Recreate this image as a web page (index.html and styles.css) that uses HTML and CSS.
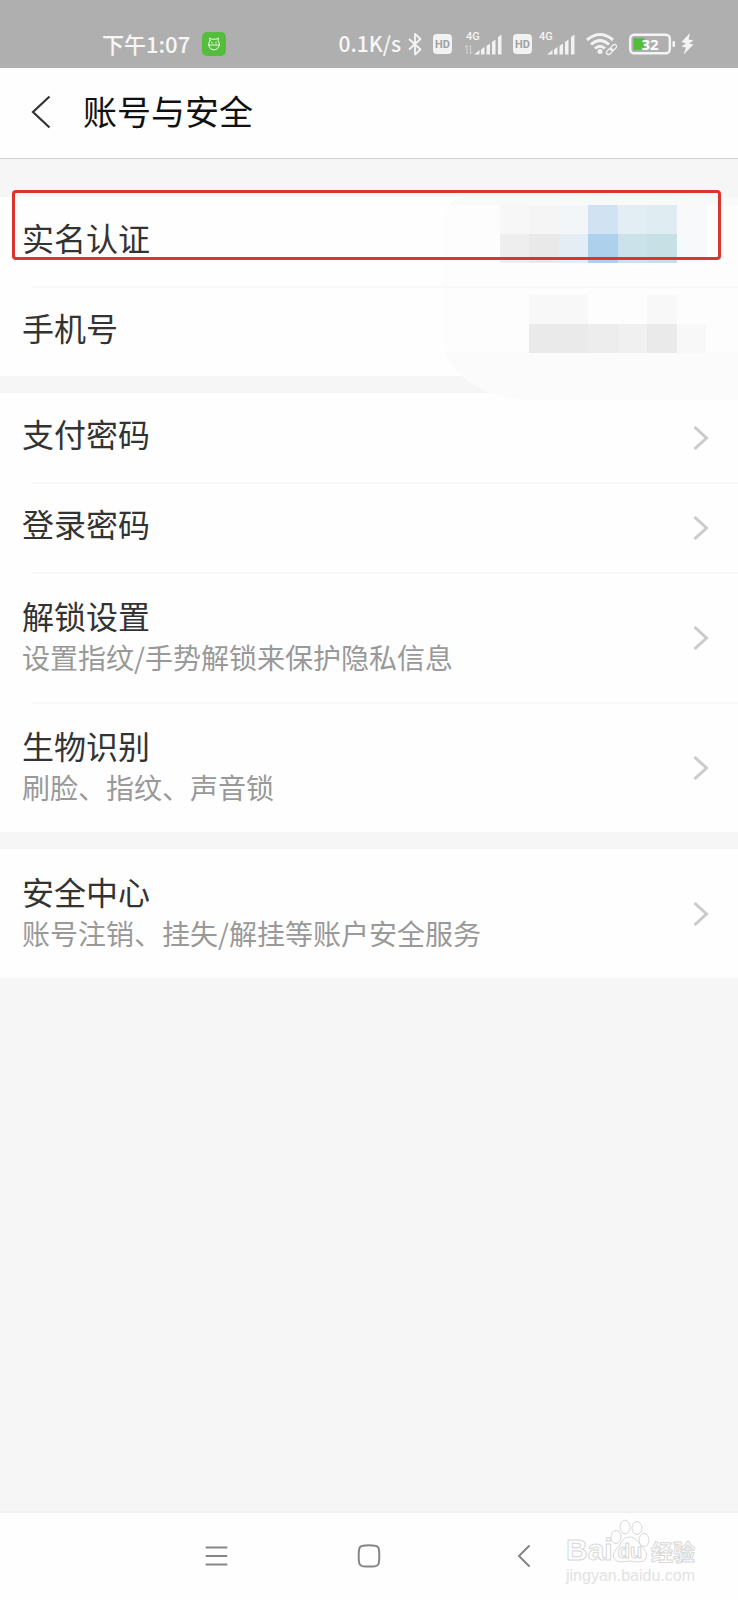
FILE: index.html
```
<!DOCTYPE html>
<html lang="zh-CN">
<head>
    <meta charset="UTF-8">
    <meta name="viewport" content="width=device-width, initial-scale=1.0">
    <title>账号与安全</title>
    <link rel="stylesheet" href="styles.css">
</head>
<body>
    <!-- Status bar -->
    <div class="status-bar">
        <div class="status-left">
            <span class="time">下午1:07</span>
            <svg width="24" height="24" viewBox="0 0 24 24">
                <rect width="24" height="24" rx="5" fill="#55bd3c"/>
                <g fill="none" stroke="#e9fae4" stroke-width="1" stroke-linecap="round" stroke-linejoin="round">
                    <path d="M8 8.500 7.500 6 10 7.300Q12 6.800 14 7.300L16.500 6 16 8.500Q18 11 17.200 14 15.500 18 12 18 8.500 18 6.800 14 6 11 8 8.500Z"/>
                    <path d="M6.500 13H17.500M10 10.200V11M14 10.200V11"/>
                </g>
            </svg>
        </div>
        <div class="status-right">
            <span class="speed">0.1K/s</span>
            <svg width="20" height="24" viewBox="0 0 20 24">
                <path d="M2 7 13.500 17.500 8 22.500V2L13.500 7 2 17.500" fill="none" stroke="#f5f5f5" stroke-width="1.800" stroke-linejoin="round"/>
            </svg>
            <svg width="25" height="24" viewBox="0 0 25 24">
                <rect y="2" width="19" height="20" rx="4" fill="#f2f2f2"/>
                <text class="hd" x="9.500" y="16" text-anchor="middle">HD</text>
            </svg>
            <svg width="43" height="28" viewBox="0 0 43 28">
                <text class="net" x="2" y="10">4G</text>
                <path d="M3 24V15L1 17M6.500 15V24L8.500 22" fill="none" stroke="#d5d5d5" stroke-width="1"/>
                <path d="M10 24.500 15.500 20V24.500ZM17 19.500 20.500 17V24.500H17ZM22.500 16 26 13.500V24.500H22.500ZM28 12 31.500 9.500V24.500H28ZM34 7 37.500 4.500V24.500H34Z" fill="#f2f2f2"/>
            </svg>
            <svg width="20" height="24" viewBox="0 0 20 24">
                <rect y="2" width="19" height="20" rx="4" fill="#f2f2f2"/>
                <text class="hd" x="9.500" y="16" text-anchor="middle">HD</text>
            </svg>
            <svg width="40" height="28" viewBox="0 0 40 28">
                <text class="net" x="0" y="10">4G</text>
                <path d="M8 24.500 13.500 20V24.500ZM15 19.500 18.500 17V24.500H15ZM20.500 16 24 13.500V24.500H20.500ZM26 12 29.500 9.500V24.500H26ZM32 7 35.500 4.500V24.500H32Z" fill="#f2f2f2"/>
            </svg>
            <svg width="38" height="24" viewBox="0 0 38 24">
                <g fill="none" stroke="#f2f2f2" stroke-width="3">
                    <path d="M2 8Q15 -3 28 8"/>
                    <path d="M6 12.500Q15 4.500 24 12.500"/>
                    <path d="M10 16.500Q15 12 20 16.500"/>
                </g>
                <circle cx="15" cy="19.500" r="2.500" fill="#f2f2f2"/>
                <g fill="none" stroke="#f2f2f2" stroke-width="1.300">
                    <rect x="21" y="17.500" width="7" height="4" rx="2" transform="rotate(-45 24.500 19.500)"/>
                    <rect x="25" y="13.500" width="7" height="4" rx="2" transform="rotate(-45 28.500 15.500)"/>
                </g>
            </svg>
            <svg width="46" height="24" viewBox="0 0 46 24">
                <rect x="1.200" y="2.700" width="39.600" height="18.600" rx="4" fill="none" stroke="#f5f5f5" stroke-width="2.400"/>
                <rect x="4.500" y="6" width="11" height="12" fill="#55bd3c"/>
                <rect x="43.500" y="9" width="2.500" height="6" rx="1" fill="#f5f5f5"/>
                <text class="battery" x="21" y="17.500" text-anchor="middle">32</text>
            </svg>
            <svg width="13" height="24" viewBox="0 0 13 24">
                <path d="M9 1 0.500 10 5 11.500 0.500 14.500 5 15.500 2.500 22.500 12.500 12.500 8 11.500 12.500 8.500 7.500 7.500Z" fill="#f5f5f5"/>
            </svg>
        </div>
    </div>

    <!-- Title bar -->
    <header class="header">
        <button class="back-button" type="button" aria-label="返回">
            <svg width="20" height="34" viewBox="0 0 20 34">
                <path d="M18.500 1.500 2 17 18.500 32.500" fill="none" stroke="#333" stroke-width="2.200"/>
            </svg>
        </button>
        <h1>账号与安全</h1>
    </header>

    <main class="content">
        <div class="group group-private">
            <div class="smudge"></div>
            <a class="row" href="#">
                <span class="row-text"><span class="label">实名认证</span></span>
                <span class="mosaic">
                    <i class="t1"></i><i class="t2"></i><i class="t3"></i><i class="t4"></i><i class="t5"></i><i class="t6"></i><i class="t7"></i>
                    <i class="t8"></i><i class="t9"></i><i class="t10"></i><i class="t11"></i><i class="t12"></i><i class="t13"></i><i class="t7"></i>
                </span>
            </a>
            <a class="row" href="#">
                <span class="row-text"><span class="label">手机号</span></span>
                <span class="mosaic">
                    <i></i><i class="g1"></i><i class="g1"></i><i></i><i></i><i class="g1"></i><i></i>
                    <i></i><i class="g4"></i><i class="g4"></i><i class="g3"></i><i class="g2"></i><i class="g4"></i><i class="g1"></i>
                </span>
            </a>
            <div class="highlight"></div>
        </div>

        <div class="group">
            <a class="row" href="#">
                <span class="row-text"><span class="label">支付密码</span></span>
                <svg class="chevron" viewBox="0 0 16 24"><path d="M1.500 1 13.500 12 1.500 23"/></svg>
            </a>
            <a class="row" href="#">
                <span class="row-text"><span class="label">登录密码</span></span>
                <svg class="chevron" viewBox="0 0 16 24"><path d="M1.500 1 13.500 12 1.500 23"/></svg>
            </a>
            <a class="row" href="#">
                <span class="row-text with-desc">
                    <span class="label">解锁设置</span>
                    <span class="desc">设置指纹/手势解锁来保护隐私信息</span>
                </span>
                <svg class="chevron" viewBox="0 0 16 24"><path d="M1.500 1 13.500 12 1.500 23"/></svg>
            </a>
            <a class="row" href="#">
                <span class="row-text with-desc">
                    <span class="label">生物识别</span>
                    <span class="desc">刷脸、指纹、声音锁</span>
                </span>
                <svg class="chevron" viewBox="0 0 16 24"><path d="M1.500 1 13.500 12 1.500 23"/></svg>
            </a>
        </div>

        <div class="group">
            <a class="row" href="#">
                <span class="row-text with-desc">
                    <span class="label">安全中心</span>
                    <span class="desc">账号注销、挂失/解挂等账户安全服务</span>
                </span>
                <svg class="chevron" viewBox="0 0 16 24"><path d="M1.500 1 13.500 12 1.500 23"/></svg>
            </a>
        </div>
    </main>

    <!-- System navigation -->
    <nav class="nav-bar">
        <button type="button" aria-label="菜单">
            <svg width="24" height="24" viewBox="0 0 24 24">
                <path d="M2.500 3.500H22.500M2.500 12H22.500M2.500 20.500H22.500" fill="none" stroke="#858585" stroke-width="2" stroke-linecap="round"/>
            </svg>
        </button>
        <button type="button" aria-label="主页">
            <svg width="24" height="24" viewBox="0 0 24 24">
                <path d="M6 1.700Q12 1 18 1.700 21.600 2 22 6 22.600 12 22 18 21.600 21.700 18 22.200 12 22.800 6 22.200 2.400 21.700 2 18 1.400 12 2 6 2.400 2 6 1.700Z" fill="none" stroke="#858585" stroke-width="2"/>
            </svg>
        </button>
        <button type="button" aria-label="返回">
            <svg width="24" height="24" viewBox="0 0 24 24">
                <path d="M19 2 9 12 19 22" fill="none" stroke="#858585" stroke-width="2" stroke-linecap="round"/>
            </svg>
        </button>
        <svg class="watermark" width="136" height="68" viewBox="0 0 136 68">
            <text class="mark-latin" x="1" y="41">Bai</text>
            <g class="paw">
                <ellipse cx="51" cy="18" rx="5" ry="6.500"/>
                <ellipse cx="60" cy="8" rx="5" ry="6.800"/>
                <ellipse cx="72" cy="9" rx="5" ry="6.500"/>
                <ellipse cx="79" cy="21" rx="5" ry="6.500"/>
                <path d="M64 18C70 18 73 22 76 27 80 31 83 34 81 39 79 44 72 43 65 42 58 43 51 44 49 39 47 34 51 30 54 27 57 22 59 18 64 18Z"/>
            </g>
            <text class="mark-du" x="65" y="39" text-anchor="middle">du</text>
            <text class="mark-cjk" x="86" y="41">经验</text>
            <text class="mark-url" x="1" y="62">jingyan.baidu.com</text>
        </svg>
    </nav>
</body>
</html>
```
FILE: styles.css
```
/* Global Styles */
* {
    box-sizing: border-box;
}

body {
    margin: 0;
    min-height: 100vh;
    display: flex;
    flex-direction: column;
    background-color: #f6f6f6;
    font-family: "Noto Sans CJK SC", sans-serif;
    color: #333;
}

button {
    padding: 0;
    border: none;
    background: none;
    cursor: pointer;
}

svg {
    display: block;
    flex-shrink: 0;
}

/* Status Bar */
.status-bar {
    display: flex;
    justify-content: space-between;
    height: 68px;
    padding: 20px 44px 0 102px;
    background-color: #afafaf;
    color: #f7f7f7;
    line-height: 46px;
    font-weight: 500;
}

.status-left,
.status-right {
    display: flex;
    align-items: center;
    height: 48px;
}

.status-left {
    gap: 12px;
}

.status-right {
    gap: 6px;
}

.time {
    font-size: 22px;
    padding-bottom: 2px;
}

.speed {
    font-size: 21px;
    padding-bottom: 2px;
}

.hd {
    font: bold 11px Roboto, sans-serif;
    fill: #a0a0a0;
}

.net {
    font: 500 11px Roboto, sans-serif;
    fill: #f5f5f5;
}

.battery {
    font: bold 15px "Noto Sans", sans-serif;
    fill: #fff;
}

/* Header */
.header {
    display: flex;
    align-items: center;
    gap: 32px;
    height: 91px;
    padding: 0 31px;
    background-color: #fefefe;
    border-bottom: 1px solid #d0d0d0;
}

.header h1 {
    margin: 0;
    padding-bottom: 4px;
    font-size: 34px;
    line-height: 48px;
    font-weight: 400;
    color: #111;
}

.header .back-button {
    padding-bottom: 2px;
}

/* Setting Groups */
.content {
    flex: 1;
    display: flex;
    flex-direction: column;
    gap: 17px;
    padding-top: 38px;
}

.group {
    background-color: #fefefe;
}

.group-private {
    position: relative;
}

.row {
    display: flex;
    align-items: center;
    justify-content: space-between;
    position: relative;
    padding: 0 29px 0 22px;
    color: inherit;
    text-decoration: none;
}

/* Thin line between rows, starts a bit inside */
.row + .row {
    margin-top: 1px;
}

.row + .row::before {
    content: "";
    position: absolute;
    top: -1px;
    left: 32px;
    right: 0;
    height: 2px;
    background-color: #f8f8f8;
}

.row-text {
    display: flex;
    flex-direction: column;
    gap: 1px;
    padding: 20px 0 29px;
}

.with-desc {
    padding: 22px 0 24px;
}

.label {
    font-size: 32px;
    line-height: 40px;
    font-weight: 400;
}

.desc {
    font-size: 28px;
    line-height: 42px;
    font-weight: 400;
    color: #999;
}

.chevron {
    width: 16px;
    height: 24px;
    fill: none;
    stroke: #cbcbcb;
    stroke-width: 3;
}

/* Masked values */
.mosaic {
    display: grid;
    grid-template-columns: repeat(7, 1fr);
    grid-auto-rows: 29px;
    align-self: flex-start;
    width: 206px;
    margin: 8px 3px 0 0;
}

.smudge {
    position: absolute;
    top: 0;
    right: 0;
    bottom: -24px;
    width: 40%;
    background: linear-gradient(#f9f9f9 8px, #fdfdfd 8px, #fdfdfd 155px, #fbfbfb 155px);
    border-radius: 24px 0 0 90px / 24px 0 0 60px;
}

.t1 { background-color: #f7f7f8; }
.t2 { background-color: #f5f5f5; }
.t3 { background-color: #f3f6f8; }
.t4 { background-color: #d1e2f2; }
.t5 { background-color: #e2eef4; }
.t6 { background-color: #dfedf2; }
.t7 { background-color: #f8f9fa; }
.t8 { background-color: #eee; }
.t9 { background-color: #e9e9e9; }
.t10 { background-color: #e4edf4; }
.t11 { background-color: #add0ec; }
.t12 { background-color: #cbe2ea; }
.t13 { background-color: #c7e0e6; }
.g1 { background-color: #f8f8f8; }
.g2 { background-color: #f0f0f0; }
.g3 { background-color: #ededed; }
.g4 { background-color: #eaeaea; }

/* Red frame around the first row */
.highlight {
    position: absolute;
    top: -7px;
    left: 12px;
    right: 17px;
    height: 70px;
    border: 3px solid #dc352e;
    border-radius: 4px;
    pointer-events: none;
}

/* Bottom Navigation */
.nav-bar {
    position: relative;
    display: flex;
    justify-content: center;
    align-items: center;
    height: 89px;
    padding-bottom: 2px;
    background-color: #fefefe;
    border-top: 2px solid #f1f1f1;
}

.nav-bar button {
    display: flex;
    justify-content: center;
    width: 153px;
}

/* Watermark */
.watermark {
    position: absolute;
    top: 6px;
    right: 37px;
}

.watermark text,
.paw {
    fill: #fefefe;
    stroke: #d8d8d8;
    stroke-width: 1;
}

.mark-latin {
    font: bold 30px "Liberation Sans", sans-serif;
}

.mark-du {
    font: bold 20px "Liberation Sans", sans-serif;
}

.mark-cjk {
    font: bold 22px "Noto Sans CJK SC", sans-serif;
}

.watermark .mark-url {
    font: 16px "Liberation Sans", sans-serif;
    fill: #e2e2e2;
    stroke: none;
}
```
